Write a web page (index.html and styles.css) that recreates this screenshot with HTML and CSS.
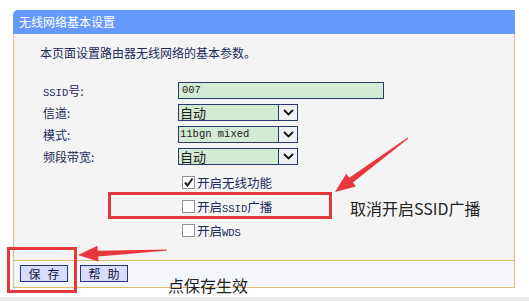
FILE: index.html
```html
<!DOCTYPE html>
<html lang="zh-CN">

<head>
    <meta charset="UTF-8">
    <title>无线网络基本设置</title>
    <link rel="stylesheet" href="styles.css">
</head>

<body>
    <div class="page">

        <div class="panel">
            <div class="panel-title">无线网络基本设置</div>

            <div class="panel-body">
                <p class="intro">本页面设置路由器无线网络的基本参数。</p>

                <div class="form">
                    <label><span class="en">SSID</span>号:</label>
                    <div class="field wide"><span class="en">007</span></div>

                    <label>信道:</label>
                    <div class="field select"><span>自动</span><i class="drop"><svg width="11" height="7" viewBox="0 0 11 7"><path d="M1 1 L5.5 5.5 L10 1" fill="none" stroke="#111" stroke-width="1.8"/></svg></i></div>

                    <label>模式:</label>
                    <div class="field select"><span class="en">11bgn mixed</span><i class="drop"><svg width="11" height="7" viewBox="0 0 11 7"><path d="M1 1 L5.5 5.5 L10 1" fill="none" stroke="#111" stroke-width="1.8"/></svg></i></div>

                    <label>频段带宽:</label>
                    <div class="field select"><span>自动</span><i class="drop"><svg width="11" height="7" viewBox="0 0 11 7"><path d="M1 1 L5.5 5.5 L10 1" fill="none" stroke="#111" stroke-width="1.8"/></svg></i></div>
                </div>

                <div class="checks">
                    <div class="check-row">
                        <span class="box"><svg width="11" height="11" viewBox="0 0 11 11"><path d="M2 5.5 L4.5 8.5 L9.5 1.5" fill="none" stroke="#222" stroke-width="2"/></svg></span>
                        <span>开启无线功能</span>
                    </div>
                    <div class="check-row">
                        <span class="box"></span>
                        <span>开启<span class="en">SSID</span>广播</span>
                    </div>
                    <div class="check-row">
                        <span class="box"></span>
                        <span>开启<span class="en">WDS</span></span>
                    </div>
                </div>
            </div>

            <div class="panel-foot">
                <button class="btn">保存</button>
                <button class="btn">帮助</button>
            </div>
        </div>

        <div class="bottom-strip"></div>

        <!-- annotations drawn over the screenshot -->
        <div class="mark mark-ssid"></div>
        <div class="mark mark-save"></div>
        <div class="note note-ssid">取消开启SSID广播</div>
        <div class="note note-save">点保存生效</div>

        <svg class="arrows" width="529" height="301" viewBox="0 0 529 301">
            <polygon fill="#e8383d" points="408.3,138.4 352.9,182.5 355.9,186.5 335,192 346.3,173.7 349.3,177.7 407.7,137.6"/>
            <polygon fill="#e8383d" points="167,250.5 98.2,256.6 98.5,261.6 78,255 97.4,245.7 97.8,250.7 167,249.5"/>
        </svg>

    </div>
</body>

</html>
```

FILE: styles.css
```css
body {
    margin: 0;
    background-color: #ffffff;
    font-family: "Noto Sans CJK SC", sans-serif;
}

.page {
    position: relative;
    width: 529px;
    height: 301px;
    overflow: hidden;
}

.panel {
    width: 502px;
    margin: 10px 0 0 13px;
}

.panel-title {
    height: 24px;
    line-height: 24px;
    padding-left: 6px;
    background-color: #6699fe;
    border-top-left-radius: 5px;
    color: #ffffff;
    font-size: 12px;
}

.panel-body {
    height: 226px;
    background-color: #f4f4f4;
    border-left: 1px solid #e3bb72;
    border-right: 1px solid #e3bb72;
    border-bottom: 1px solid #e3bb72;
}

.intro {
    margin: 0;
    padding: 11px 0 0 26px;
    font-size: 12px;
    line-height: 16px;
    color: #1c2a5c;
}

.form {
    display: grid;
    grid-template-columns: 135px auto;
    grid-auto-rows: 22px;
    align-items: center;
    margin-top: 18px;
    padding-left: 29px;
    font-size: 12px;
    color: #1c2a5c;
}

.en {
    font-family: "Liberation Mono", monospace;
    font-size: 10.5px;
}

.field {
    display: flex;
    align-items: center;
    box-sizing: border-box;
    height: 17px;
    background-color: #d3ead3;
    border: 1px solid #2a3a6c;
    color: #1a1a1a;
    font-size: 13px;
}

.field span {
    padding-left: 3px;
}

.field.wide {
    width: 206px;
}

.field.select {
    width: 120px;
}

.field.select span {
    flex: 1;
    padding-left: 1px;
}

.drop {
    display: flex;
    align-items: center;
    justify-content: center;
    width: 18px;
    height: 15px;
    background-color: #eef0f2;
    border-left: 1px solid #2a3a6c;
}

.checks {
    margin-top: 3px;
    padding-left: 168px;
    font-size: 12.5px;
    color: #1c2a5c;
}

.check-row {
    display: flex;
    align-items: center;
    gap: 2px;
    height: 24px;
}

.box {
    display: flex;
    align-items: center;
    justify-content: center;
    box-sizing: border-box;
    width: 13px;
    height: 13px;
    background-color: #ffffff;
    border: 1px solid #8a8f98;
}

.panel-foot {
    display: flex;
    gap: 12px;
    height: 22px;
    padding: 4px 0 0 6px;
    background-color: #f5f6fb;
    border-left: 1px solid #e3bb72;
    border-right: 1px solid #e3bb72;
    border-bottom: 1px solid #e3bb72;
}

.btn {
    width: 48px;
    height: 17px;
    padding: 0 0 0 7px;
    background-color: #d7ddfa;
    border: 1px solid #24367a;
    color: #111a40;
    font-family: "Noto Sans CJK SC", sans-serif;
    font-size: 12px;
    line-height: 15px;
    letter-spacing: 7px;
    white-space: nowrap;
}

.bottom-strip {
    margin-top: 9px;
    height: 4px;
    background-color: #ececec;
}

.mark {
    position: absolute;
    box-sizing: border-box;
    border: 3px solid #e3393d;
}

.mark-ssid {
    left: 108px;
    top: 192px;
    width: 224px;
    height: 27px;
}

.mark-save {
    left: 7px;
    top: 247px;
    width: 70px;
    height: 46px;
}

.note {
    position: absolute;
    font-size: 16px;
    line-height: 22px;
    color: #222222;
}

.note-ssid {
    left: 350px;
    top: 197px;
}

.note-save {
    left: 168px;
    top: 274px;
}

.arrows {
    position: absolute;
    left: 0;
    top: 0;
    pointer-events: none;
}
```
